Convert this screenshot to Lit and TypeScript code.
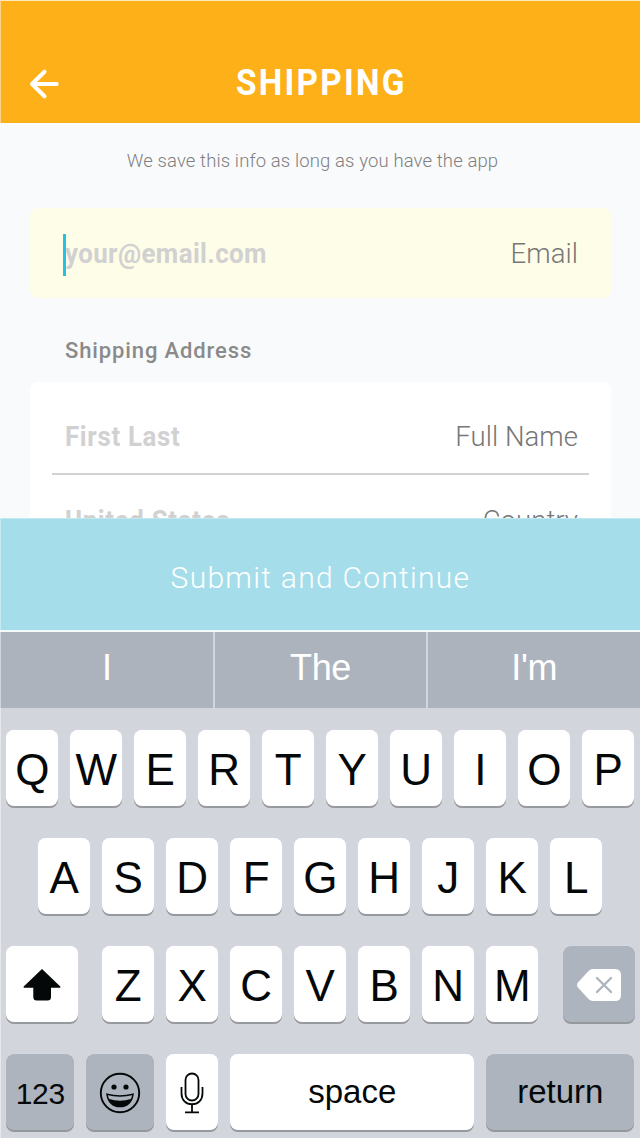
import { LitElement, html, css } from "lit";
import { customElement, property } from "lit/decorators.js";

@customElement("key-cap")
class KeyCap extends LitElement {
  @property() tone = "light";
  @property() size = "letter";

  static styles = css`
    :host { display: block; height: 76px; }
    .cap {
      box-sizing: border-box;
      height: 76px;
      border-radius: 8px;
      display: flex;
      align-items: center;
      justify-content: center;
      background: #fff;
      color: #050808;
      box-shadow: 0 2px 0 #95989c, 0 0 1px #e8eaee;
      font-family: "Liberation Sans", Arial, sans-serif;
    }
    .dark { background: #adb4be; }
    .letter { font-size: 44px; line-height: 72px; padding-top: 4px; }
    .icon { padding-top: 1px; }
    .word { font-size: 33px; line-height: 76px; }
    .digits { font-size: 30px; line-height: 72px; padding-top: 3px; letter-spacing: -0.3px; }
  `;

  render() {
    return html`<div class="cap ${this.tone} ${this.size}"><slot></slot></div>`;
  }
}

@customElement("field-row")
class FieldRow extends LitElement {
  @property() hint = "";
  @property() label = "";
  @property({ type: Boolean }) focused = false;

  static styles = css`
    :host { display: block; }
    .row {
      display: flex;
      justify-content: space-between;
      align-items: center;
      height: 42px;
      font-family: Roboto, sans-serif;
      font-size: 27.5px;
      line-height: 42px;
      white-space: nowrap;
    }
    .hint { position: relative; color: #d1d1d1; font-weight: 700; }
    .text { display: inline-block; transform: scaleX(0.94); transform-origin: 0 50%; letter-spacing: 0.7px; }
    .active .text { letter-spacing: 0.42px; }
    .label { color: #777; font-weight: 300; letter-spacing: 0.05px; }
    .caret { position: absolute; left: -2px; top: 1px; width: 3px; height: 42px; background: #23c1e3; }
  `;

  render() {
    return html`<div class="row">
      <span class="hint ${this.focused ? "active" : ""}"
        ><span class="text">${this.hint}</span>${this.focused ? html`<i class="caret"></i>` : ""}</span
      >
      <span class="label">${this.label}</span>
    </div>`;
  }
}

@customElement("app-root")
class AppRoot extends LitElement {
  static styles = css`
    :host {
      display: flex;
      flex-direction: column;
      width: 640px;
      height: 1138px;
      overflow: hidden;
      background: #f9fafc;
      font-family: Roboto, sans-serif;
    }
    .bar {
      box-sizing: border-box;
      height: 123px;
      border-top: 1px solid #fdeac4;
      border-left: 1px solid #fdd48a;
      background: #fdb018;
      display: grid;
      grid-template-columns: 80px 1fr 80px;
      align-items: center;
      padding-top: 43px;
    }
    .back { width: 32px; height: 32px; margin-left: 27px; display: block; }
    .title {
      margin: 0 0 2px;
      padding-left: 2px;
      text-align: center;
      color: #fff;
      font-size: 37px;
      line-height: 44px;
      font-weight: 700;
      letter-spacing: 2.5px;
      transform: scaleX(0.9);
    }
    .form { height: 395px; overflow: hidden; padding: 0 29px 0 30px; }
    .note {
      margin: 26px 16px 0 0;
      height: 24px;
      line-height: 24px;
      font-size: 18.5px;
      font-weight: 300;
      color: #808080;
      text-align: center;
      letter-spacing: 0.12px;
    }
    .card { border-radius: 8px; padding: 0 33px 0 35px; background: #fff; }
    .email { height: 90px; margin-top: 35px; background: #fefde8; padding-top: 25px; box-sizing: border-box; }
    .heading {
      margin: 39px 0 0 35px;
      height: 28px;
      line-height: 28px;
      font-size: 22px;
      font-weight: 500;
      color: #8a8a8a;
      letter-spacing: 0.88px;
    }
    .address { margin-top: 17px; height: 180px; padding-top: 34px; }
    .rule { height: 2px; background: #d2d2d2; margin: 15px -11px 25px -13px; }
    .submit {
      height: 112px;
      border: 0;
      border-left: 1px solid #c6eaf2;
      border-top: 1px solid #c2e8f0;
      box-sizing: border-box;
      padding: 6px 0 0;
      background: #a5deea;
      color: #fff;
      font: 300 30px/40px Roboto, sans-serif;
      letter-spacing: 1.28px;
    }
    .suggest {
      box-sizing: border-box;
      height: 76px;
      margin-top: 2px;
      border-left: 1px solid #d2d5dc;
      display: grid;
      grid-template-columns: repeat(3, 1fr);
      gap: 2px;
      background: #d2d5dc;
      box-shadow: 0 -2px 0 #f5fafc;
    }
    .option {
      background: #adb3bd;
      color: #fff;
      text-align: center;
      font: 36px/72px "Liberation Sans", Arial, sans-serif;
      letter-spacing: -0.4px;
    }
    .keys {
      flex: 1;
      background: #d2d5dc;
      border-left: 1px solid #e6e8ec;
      padding: 22px 5.5px 0 5px;
      display: flex;
      flex-direction: column;
      gap: 32px;
    }
    .line { display: flex; gap: 12px; justify-content: center; }
    .spread { justify-content: space-between; }
    .letters { display: flex; gap: 12px; }
    .k { width: 52px; }
    .wide { width: 72px; }
    .mode { width: 68px; }
    .space { width: 244px; }
    .return { width: 148px; }
    svg { display: block; }
  `;

  private letters(row: string) {
    return [...row].map((c) => html`<key-cap class="k">${c}</key-cap>`);
  }

  render() {
    return html`
      <header class="bar">
        <svg class="back" viewBox="0 0 32 32" fill="none" stroke="#fff" stroke-width="4" stroke-linecap="round" stroke-linejoin="round">
          <path d="M16.5 3.7 4 16 16.5 28.3M4.5 16H28.7" />
        </svg>
        <h1 class="title">SHIPPING</h1>
      </header>
      <main class="form">
        <p class="note">We save this info as long as you have the app</p>
        <section class="card email"><field-row hint="your@email.com" label="Email" focused></field-row></section>
        <div class="heading">Shipping Address</div>
        <section class="card address">
          <field-row hint="First Last" label="Full Name"></field-row>
          <div class="rule"></div>
          <field-row hint="United States" label="Country"></field-row>
        </section>
      </main>
      <button class="submit">Submit and Continue</button>
      <div class="suggest">
        ${["I", "The", "I'm"].map((w) => html`<div class="option">${w}</div>`)}
      </div>
      <div class="keys">
        <div class="line">${this.letters("QWERTYUIOP")}</div>
        <div class="line">${this.letters("ASDFGHJKL")}</div>
        <div class="line spread">
          <key-cap class="wide" size="icon">
            <svg width="40" height="34" viewBox="0 0 40 34" fill="#050808">
              <path d="M20 1 38.3 18.4Q39 19.8 37.5 19.8H29V29Q29 32.5 25.5 32.5H14.8Q11.3 32.5 11.3 29V19.8H2.5Q1 19.8 1.7 18.4Z" />
            </svg>
          </key-cap>
          <div class="letters">${this.letters("ZXCVBNM")}</div>
          <key-cap class="wide" tone="dark" size="icon">
            <svg width="46" height="34" viewBox="0 0 46 34">
              <path fill="#fff" d="M17 1H39Q45 1 45 7V27Q45 33 39 33H17Q14.5 33 12.5 31L2 19.5Q0 17 2 14.5L12.5 3Q14.5 1 17 1Z" />
              <path d="M21 10 35 24M35 10 21 24" stroke="#adb4be" stroke-width="2.4" stroke-linecap="round" />
            </svg>
          </key-cap>
        </div>
        <div class="line">
          <key-cap class="mode" tone="dark" size="digits">123</key-cap>
          <key-cap class="mode" tone="dark" size="icon">
            <svg width="42" height="42" viewBox="0 0 42 42" fill="none" stroke="#050808">
              <circle cx="21" cy="21" r="19.2" stroke-width="1.9" />
              <circle cx="15" cy="15" r="2.6" fill="#050808" stroke="none" />
              <circle cx="27" cy="15" r="2.6" fill="#050808" stroke="none" />
              <path d="M8 22.3Q21 25.5 34 22.3Q32 34.5 21 34.5T8 22.3Z" stroke-width="1.5" />
              <path d="M9.5 26.8Q21 30.5 32.5 26.8Q29.5 34.5 21 34.5T9.5 26.8Z" fill="#050808" stroke="none" />
            </svg>
          </key-cap>
          <key-cap class="k" size="icon">
            <svg width="24" height="42" viewBox="0 0 24 42" fill="none" stroke="#050808" stroke-width="1.8">
              <rect x="5.5" y="1.5" width="13" height="27" rx="6.5" />
              <path d="M1.5 15V21.5C1.5 28 6 32.2 12 32.2S22.5 28 22.5 21.5V15M12 32.2V40M5 40.3H19" />
            </svg>
          </key-cap>
          <key-cap class="space" size="word">space</key-cap>
          <key-cap class="return" tone="dark" size="word">return</key-cap>
        </div>
      </div>
    `;
  }
}
